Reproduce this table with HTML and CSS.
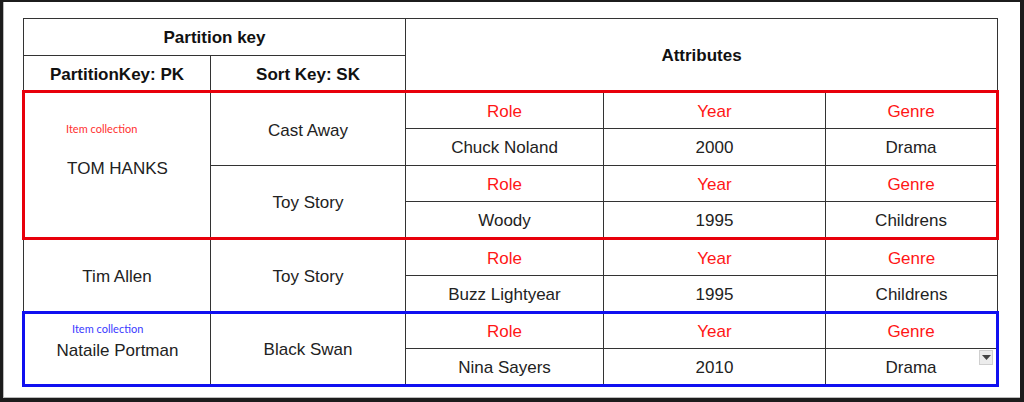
FILE: index.html
```html
<!DOCTYPE html>
<html>
<head>
<meta charset="utf-8">
<link rel="stylesheet" href="styles.css">
</head>
<body>
<div class="frame">
  <table class="grid">
    <colgroup>
      <col class="c1"><col class="c2"><col class="c3"><col class="c4"><col class="c5">
    </colgroup>
    <thead>
      <tr>
        <th colspan="2">Partition key</th>
        <th colspan="3" rowspan="2" class="attr">Attributes</th>
      </tr>
      <tr>
        <th>PartitionKey: PK</th>
        <th>Sort Key: SK</th>
      </tr>
    </thead>
    <tbody class="red">
      <tr>
        <td rowspan="4"><div class="pk pk-tom"><span class="label label-red">Item collection</span>TOM HANKS</div></td>
        <td rowspan="2">Cast Away</td>
        <td class="attr-name">Role</td><td class="attr-name">Year</td><td class="attr-name">Genre</td>
      </tr>
      <tr><td>Chuck Noland</td><td>2000</td><td>Drama</td></tr>
      <tr>
        <td rowspan="2">Toy Story</td>
        <td class="attr-name">Role</td><td class="attr-name">Year</td><td class="attr-name">Genre</td>
      </tr>
      <tr><td>Woody</td><td>1995</td><td>Childrens</td></tr>
    </tbody>
    <tbody>
      <tr>
        <td rowspan="2">Tim Allen</td>
        <td rowspan="2">Toy Story</td>
        <td class="attr-name">Role</td><td class="attr-name">Year</td><td class="attr-name">Genre</td>
      </tr>
      <tr><td>Buzz Lightyear</td><td>1995</td><td>Childrens</td></tr>
    </tbody>
    <tbody class="blue">
      <tr>
        <td rowspan="2"><div class="pk pk-nat"><span class="label label-blue">Item collection</span>Nataile Portman</div></td>
        <td rowspan="2">Black Swan</td>
        <td class="attr-name">Role</td><td class="attr-name">Year</td><td class="attr-name">Genre</td>
      </tr>
      <tr><td>Nina Sayers</td><td>2010</td><td><div class="cellwrap">Drama<span class="dropdown"><svg width="9" height="5" viewBox="0 0 9 5"><path d="M0 0H9L4.5 5Z" fill="#444"/></svg></span></div></td></tr>
    </tbody>
  </table>
</div>
</body>
</html>
```

FILE: styles.css
```css
html, body {
  margin: 0;
  padding: 0;
  background: #1c1c1c;
}
.frame {
  box-sizing: border-box;
  width: 1024px;
  height: 402px;
  border-style: solid;
  border-color: #1c1c1c;
  border-width: 2px 4px 4px 3px;
  background: #fff;
  box-shadow: inset 1px 0 0 #bbb, inset 0 -1px 0 #bbb;
  padding: 16px 0 0 19px;
}
.grid {
  border-collapse: collapse;
  table-layout: fixed;
  width: 974px;
  font-family: "Liberation Sans", Arial, sans-serif;
  font-size: 17px;
  color: #222;
}
.c1 { width: 187px; }
.c2 { width: 195px; }
.c3 { width: 198px; }
.c4 { width: 222px; }
.c5 { width: 172px; }
.grid tr { height: 36.7px; }
.grid th, .grid td {
  border: 1px solid #333;
  text-align: center;
  vertical-align: middle;
  padding: 3px 0 0;
  line-height: 20px;
}
.grid th {
  font-weight: bold;
  color: #111;
}
tbody.red {
  border: 3px solid #e8000b;
}
tbody.blue {
  border: 3px solid #1010f0;
}
.attr-name {
  color: #ff1616;
}
.pk {
  position: relative;
}
.pk-tom { padding-top: 4px; }
.pk-nat { padding-top: 2px; }
.label {
  position: absolute;
  font-family: Lato, "Open Sans", sans-serif;
  font-size: 11px;
  line-height: 12px;
  white-space: nowrap;
}
.label-red {
  color: #ff3030;
  left: 41px;
  top: -32px;
}
.label-blue {
  color: #3a3aff;
  left: 47px;
  top: -16px;
}
.cellwrap {
  position: relative;
}
.dropdown {
  position: absolute;
  right: 3px;
  top: -8px;
  width: 14px;
  height: 15px;
  box-sizing: border-box;
  border: 1px solid #cfcfcf;
  background: #ececec;
  display: flex;
  align-items: center;
  justify-content: center;
}
```
